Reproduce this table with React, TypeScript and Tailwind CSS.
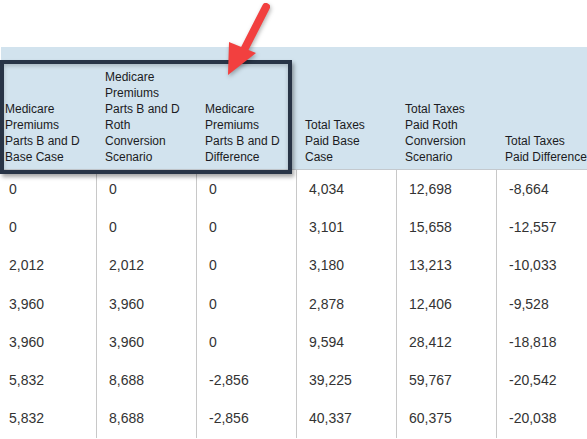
import React from "react"

const headers: string[][] = [
  ["Medicare", "Premiums", "Parts B and D", "Base Case"],
  ["Medicare", "Premiums", "Parts B and D", "Roth", "Conversion", "Scenario"],
  ["Medicare", "Premiums", "Parts B and D", "Difference"],
  ["Total Taxes", "Paid Base", "Case"],
  ["Total Taxes", "Paid Roth", "Conversion", "Scenario"],
  ["Total Taxes", "Paid Difference"],
]

const rows: string[][] = [
  ["0", "0", "0", "4,034", "12,698", "-8,664"],
  ["0", "0", "0", "3,101", "15,658", "-12,557"],
  ["2,012", "2,012", "0", "3,180", "13,213", "-10,033"],
  ["3,960", "3,960", "0", "2,878", "12,406", "-9,528"],
  ["3,960", "3,960", "0", "9,594", "28,412", "-18,818"],
  ["5,832", "8,688", "-2,856", "39,225", "59,767", "-20,542"],
  ["5,832", "8,688", "-2,856", "40,337", "60,375", "-20,038"],
]

export default function App() {
  return (
    <div
      className="relative w-[587px] h-[439px] overflow-hidden bg-white"
      style={{ fontFamily: '"Liberation Sans", Arial, sans-serif' }}
    >
      <div className="pt-[47px] pl-px w-[700px]">
        {/* Header */}
        <div className="grid grid-cols-[96px_100px_100px_100px_100px_100px] bg-[#d2e3ee] border-b border-[#c4c9ce] h-[123px]">
          {headers.map((lines, i) => (
            <div
              key={i}
              className={`flex flex-col justify-end pb-[4px] text-[12px] leading-[16px] text-[#1b1b22] ${i === 0 ? "pl-[4px]" : "pl-[8px]"}`}
            >
              {lines.map((l) => (
                <span key={l} className="whitespace-nowrap">
                  {l}
                </span>
              ))}
            </div>
          ))}
        </div>

        {/* Body */}
        {rows.map((r, ri) => (
          <div key={ri} className="grid grid-cols-[96px_100px_100px_100px_100px_100px] h-[38.3px]">
            {r.map((v, ci) => (
              <div
                key={ci}
                className={`flex items-center text-[14px] text-[#333] ${ci < 5 ? "border-r border-[#c8c8c8]" : ""} ${ci === 0 ? "pl-[8px]" : "pl-[12px]"}`}
              >
                {v}
              </div>
            ))}
          </div>
        ))}
      </div>

      {/* Highlight box */}
      <div className="absolute left-0 top-[60px] w-[292px] h-[114px] border-[4px] border-[#283446] shadow-[2px_3px_4px_rgba(0,0,0,0.35),inset_0_2px_4px_rgba(0,0,0,0.2)]" />

      {/* Arrow */}
      <svg
        className="absolute left-0 top-0"
        width="300"
        height="90"
        viewBox="0 0 300 90"
        style={{ filter: "drop-shadow(1px 2px 2px rgba(0,0,0,0.3))" }}
      >
        <line x1="266" y1="7" x2="243" y2="52" stroke="#f2403f" strokeWidth="8" strokeLinecap="round" />
        <polygon points="229,42 256,53 228,75" fill="#f2403f" />
      </svg>
    </div>
  )
}
